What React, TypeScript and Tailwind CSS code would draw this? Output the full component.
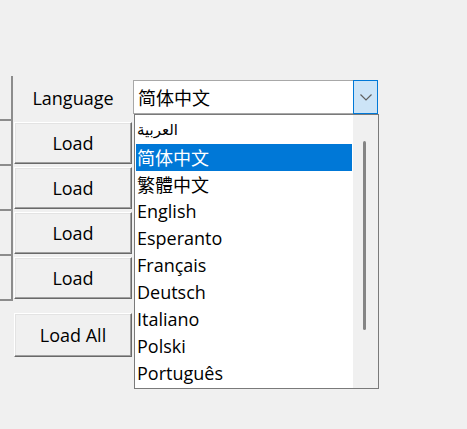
import React from "react";

const raised =
  "border border-t-white border-l-white border-r-[#696969] border-b-[#696969] shadow-[inset_-1px_-1px_#a0a0a0,inset_1px_1px_#e3e3e3] bg-[#f0f0f0]";

const items = [
  "简体中文",
  "繁體中文",
  "English",
  "Esperanto",
  "Français",
  "Deutsch",
  "Italiano",
  "Polski",
  "Português",
];

function CutCell() {
  return <div className="h-[45px] border-r-2 border-b-2 border-[#8c8c8c]" />;
}

export default function App() {
  return (
    <div className="min-h-screen w-full bg-[#f0f0f0] pt-[76px] font-['Open_Sans','Noto_Sans_CJK_SC',sans-serif] text-[18px] text-black">
      <div className="flex items-start">
        <div>
          <div className="grid grid-cols-[13px_120px]">
            <CutCell />
            <div className="flex h-[45px] items-center justify-center">Language</div>
            {[0, 1, 2, 3].map((i) => (
              <React.Fragment key={i}>
                <CutCell />
                <div className="h-[45px] pl-[1px] pt-[1px] pb-[2px] pr-[1px]">
                  <div className={`flex h-full items-center justify-center ${raised}`}>Load</div>
                </div>
              </React.Fragment>
            ))}
          </div>
          <div className="mt-[12px] ml-[14px] w-[118px]">
            <div className={`flex h-[44px] items-center justify-center ${raised}`}>Load All</div>
          </div>
        </div>

        <div className="relative mt-[4px] flex h-[34px] w-[245px]">
          <div className="flex flex-1 items-center border border-[#a8a8a8] border-r-0 bg-white pl-[4px] font-['Noto_Sans_CJK_SC',sans-serif]">
            简体中文
          </div>
          <div className="flex w-[25px] items-center justify-center border border-[#0078d7] bg-[#cce4f7]">
            <svg width="12" height="7" viewBox="0 0 12 7">
              <path d="M0.5 0.5 L6 6 L11.5 0.5" fill="none" stroke="#606060" strokeWidth="1.2" />
            </svg>
          </div>

          <div className="absolute left-[1px] top-[34px] flex h-[275px] w-[245px] border border-[#7a7a7a] bg-white">
            <div className="flex-1 px-[1px] pt-[2px]">
              <div className="flex h-[27px] items-center pl-[1px] font-['DejaVu_Sans',sans-serif] text-[15px]">
                العربية
              </div>
              {items.map((t, i) => (
                <div
                  key={t}
                  className={`flex h-[27px] items-center pl-[1px] ${
                    i === 0 ? "bg-[#0078d7] text-white" : ""
                  } ${i < 2 ? "font-['Noto_Sans_CJK_SC',sans-serif]" : ""}`}
                >
                  {t}
                </div>
              ))}
            </div>
            <div className="w-[25px] bg-[#f0f0f0] pl-[10px] pt-[26px]">
              <div className="h-[189px] w-[3px] rounded-full bg-[#858585]" />
            </div>
          </div>
        </div>
      </div>
    </div>
  );
}
